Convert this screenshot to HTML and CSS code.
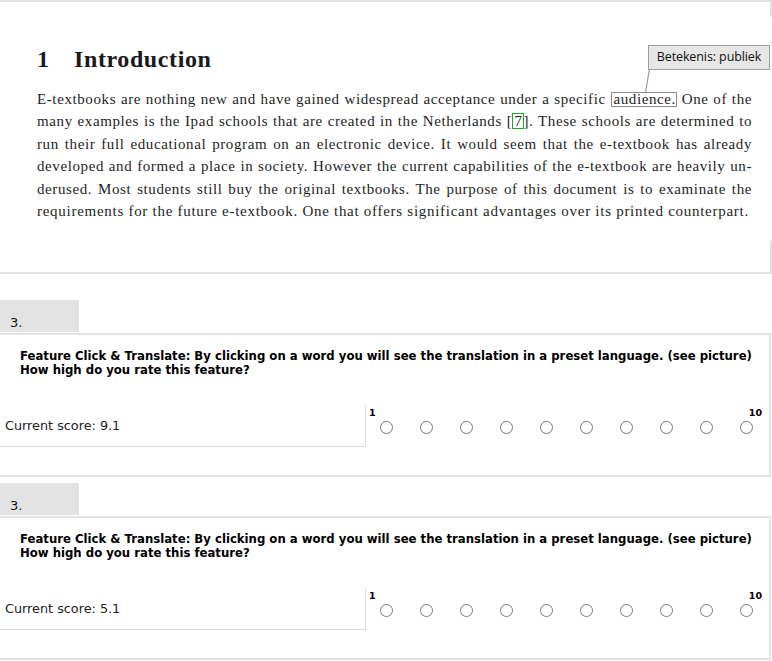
FILE: index.html
```html
<!DOCTYPE html>
<html>
<head>
<meta charset="utf-8">
<link rel="stylesheet" href="styles.css">
</head>
<body>
<div class="doc">
  <h1 class="doc-title"><span class="num">1</span>Introduction</h1>
  <div class="para">
    <div class="ln">E-textbooks are nothing new and have gained widespread acceptance under a specific <span class="hl">audience.</span> One of the</div>
    <div class="ln">many examples is the Ipad schools that are created in the Netherlands [<span class="cite">7</span>]. These schools are determined to</div>
    <div class="ln">run their full educational program on an electronic device. It would seem that the e-textbook has already</div>
    <div class="ln">developed and formed a place in society. However the current capabilities of the e-textbook are heavily un-</div>
    <div class="ln">derused. Most students still buy the original textbooks. The purpose of this document is to examinate the</div>
    <div class="ln last">requirements for the future e-textbook. One that offers significant advantages over its printed counterpart.</div>
  </div>
  <div class="tip">Betekenis: publiek</div>
  <svg class="leader" width="10" height="26" viewBox="0 0 10 26"><line x1="7.5" y1="0" x2="3.5" y2="23" stroke="#999" stroke-width="1.2"/></svg>
</div>

<div class="q first">
  <div class="tab">3.</div>
  <div class="qbox">
    <div class="qtext">Feature Click &amp; Translate: By clicking on a word you will see the translation in a preset language. (see picture)<br>How high do you rate this feature?</div>
    <div class="row">
      <div class="score">Current score: 9.1</div>
      <div class="rating">
        <div class="labels"><span>1</span><span>10</span></div>
        <div class="radios">
          <span class="radio"></span><span class="radio"></span><span class="radio"></span><span class="radio"></span><span class="radio"></span>
          <span class="radio"></span><span class="radio"></span><span class="radio"></span><span class="radio"></span><span class="radio"></span>
        </div>
      </div>
    </div>
  </div>
</div>

<div class="q second">
  <div class="tab">3.</div>
  <div class="qbox">
    <div class="qtext">Feature Click &amp; Translate: By clicking on a word you will see the translation in a preset language. (see picture)<br>How high do you rate this feature?</div>
    <div class="row">
      <div class="score">Current score: 5.1</div>
      <div class="rating">
        <div class="labels"><span>1</span><span>10</span></div>
        <div class="radios">
          <span class="radio"></span><span class="radio"></span><span class="radio"></span><span class="radio"></span><span class="radio"></span>
          <span class="radio"></span><span class="radio"></span><span class="radio"></span><span class="radio"></span><span class="radio"></span>
        </div>
      </div>
    </div>
  </div>
</div>
</body>
</html>
```
FILE: styles.css
```css
* { box-sizing: border-box; }
html, body { margin: 0; padding: 0; background: #fff; }
body { width: 772px; height: 661px; overflow: hidden; }

.doc {
  position: relative;
  width: 772px;
  height: 274px;
  border-top: 2px solid #e3e3e3;
  border-bottom: 2px solid #e3e3e3;
  padding: 41.6px 20px 0 37px;
  font-family: "Liberation Serif", "Times New Roman", serif;
  color: #1e1e1e;
}
.doc::before, .doc::after {
  content: "";
  position: absolute;
  right: 0;
  width: 2px;
  background: #e3e3e3;
}
.doc::before { top: -2px; height: 17px; }
.doc::after { bottom: -2px; height: 33px; }

.doc-title {
  margin: 0;
  font-size: 24px;
  line-height: 30px;
  font-weight: bold;
  letter-spacing: 0.6px;
  color: #1a1a1a;
}
.doc-title .num { display: inline-block; width: 37px; }

.para { margin-top: 14px; width: 715px; font-size: 15px; line-height: 22.5px; letter-spacing: 0.6px; }
.ln { text-align: justify; text-align-last: justify; white-space: nowrap; }
.ln.last { text-align-last: left; letter-spacing: 0.72px; }
.hl {
  display: inline-block;
  line-height: 13px;
  border: 1px solid #8a8a8a;
  padding: 0 0 0 1px;
  margin-left: 1px;
}
.cite {
  display: inline-block;
  line-height: 14px;
  border: 1px solid #22aa22;
  padding: 0 0 0 1px;
}

.tip {
  position: absolute;
  left: 648px;
  top: 43px;
  width: 122px;
  height: 25px;
  background: #e6e6e6;
  border: 1px solid #a0a0a0;
  font-family: "Open Sans", "Noto Sans", sans-serif;
  font-size: 12.5px;
  line-height: 22px;
  color: #111;
  text-align: center;
  letter-spacing: -0.1px;
}
.leader { position: absolute; left: 642px; top: 67px; }

.q { width: 772px; }
.q.first { margin-top: 26px; }
.q.second { margin-top: 6px; }
.tab {
  width: 79px;
  height: 32px;
  background: #e3e3e3;
  display: flex;
  align-items: flex-end;
  padding: 0 0 2px 10px;
  font-family: "DejaVu Sans", Verdana, sans-serif;
  font-size: 13px;
  color: #111;
}
.qbox {
  width: 771px;
  margin-top: 1px;
  border: 2px solid #e3e3e3;
  border-left: none;
  padding: 14px 0 28px 0;
}
.qtext {
  padding-left: 20px;
  font-family: "DejaVu Sans", Verdana, sans-serif;
  font-weight: bold;
  font-size: 11.7px;
  line-height: 14px;
  color: #000;
}
.row { display: flex; margin-top: 28px; height: 42px; }
.score {
  width: 366px;
  height: 42px;
  border-right: 1px solid #dcdcdc;
  border-bottom: 1px solid #dcdcdc;
  display: flex;
  align-items: center;
  padding: 0 0 0 5px;
  font-family: "DejaVu Sans", Verdana, sans-serif;
  font-size: 12.8px;
  color: #222;
}
.rating { width: 400px; padding-top: 2px; }
.labels {
  display: flex;
  justify-content: space-between;
  padding: 0 4px 0 3px;
  font-family: "DejaVu Sans", Verdana, sans-serif;
  font-weight: bold;
  font-size: 9.5px;
  line-height: 12px;
  color: #000;
}
.radios { display: grid; grid-template-columns: repeat(10, 40px); margin-top: 2px; }
.radio {
  justify-self: center;
  width: 13px;
  height: 13px;
  border: 1.3px solid #787878;
  border-radius: 50%;
  background: #fff;
}
```
